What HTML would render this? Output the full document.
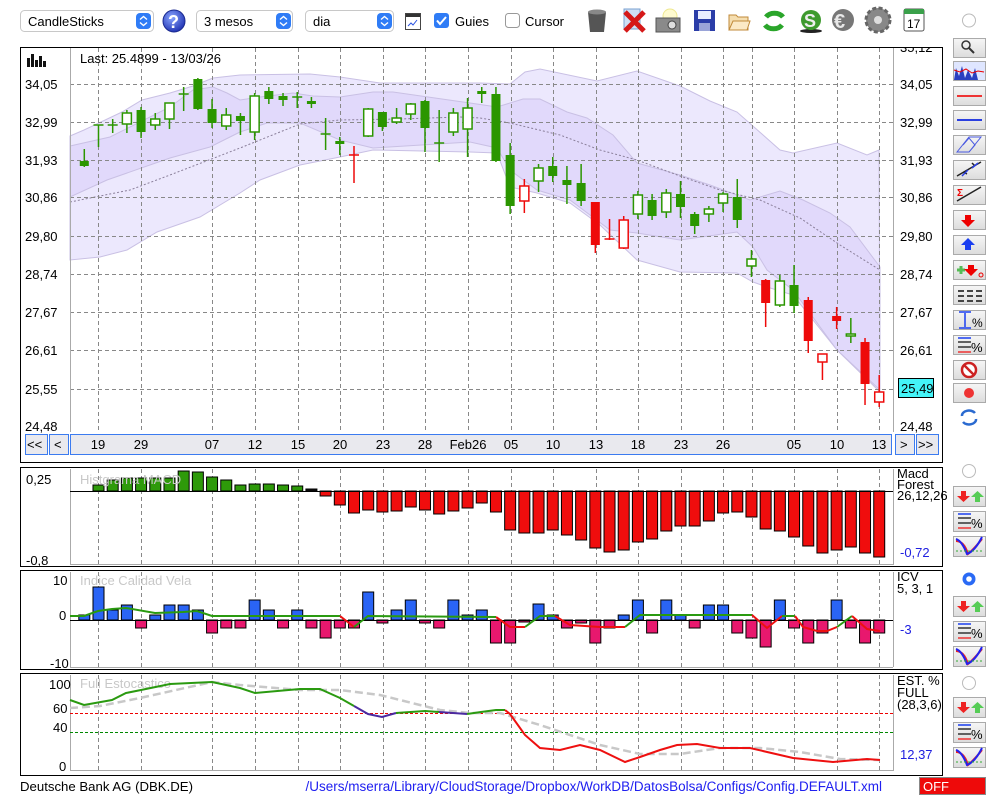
<!DOCTYPE html>
<html><head><meta charset="utf-8">
<style>
html,body{margin:0;padding:0;background:#fff;width:1000px;height:800px;overflow:hidden}
svg{position:absolute;left:0;top:0}
text{font-family:"Liberation Sans",Arial,sans-serif;font-size:13px;fill:#000}
</style></head><body>
<svg id="s" width="1000" height="800" viewBox="0 0 1000 800" xmlns="http://www.w3.org/2000/svg">
<defs>
<linearGradient id="btn" x1="0" y1="0" x2="0" y2="1"><stop offset="0" stop-color="#f6f6f6"/><stop offset="1" stop-color="#dcdcdc"/></linearGradient>
<radialGradient id="q" cx=".4" cy=".35" r=".7"><stop offset="0" stop-color="#8aa6ff"/><stop offset="1" stop-color="#1d2fb0"/></radialGradient>
<clipPath id="boxclip"><rect x="20" y="48" width="923" height="415"/></clipPath>
</defs>
<!-- toolbar -->
<rect x="20.5" y="10.5" width="133" height="21" rx="4" fill="#fff" stroke="#c8c8c8"/>
<text x="28" y="26">CandleSticks</text>
<rect x="136" y="13" width="15" height="16" rx="4" fill="#2f7cf6"/><path d="M140 19.5l3.5-3 3.5 3M140 22.5l3.5 3 3.5-3" stroke="#fff" stroke-width="1.4" fill="none"/>
<circle cx="174" cy="21" r="11" fill="url(#q)" stroke="#1a2a90"/><text x="168" y="28" style="font-size:18px;font-weight:bold;fill:#fff">?</text>
<rect x="196.5" y="10.5" width="96" height="21" rx="4" fill="#fff" stroke="#c8c8c8"/>
<text x="204" y="26">3 mesos</text>
<rect x="276" y="13" width="15" height="16" rx="4" fill="#2f7cf6"/><path d="M280 19.5l3.5-3 3.5 3M280 22.5l3.5 3 3.5-3" stroke="#fff" stroke-width="1.4" fill="none"/>
<rect x="305.5" y="10.5" width="88" height="21" rx="4" fill="#fff" stroke="#c8c8c8"/>
<text x="313" y="26">dia</text>
<rect x="377" y="13" width="15" height="16" rx="4" fill="#2f7cf6"/><path d="M381 19.5l3.5-3 3.5 3M381 22.5l3.5 3 3.5-3" stroke="#fff" stroke-width="1.4" fill="none"/>
<rect x="405.5" y="13.5" width="15" height="16" fill="#fff" stroke="#444"/><rect x="406" y="14" width="14" height="3" fill="#333"/><path d="M408 26l3-3 2 2 4-5" stroke="#2a52e0" fill="none"/>
<rect x="434" y="13" width="15" height="15" rx="3" fill="#2f7cf6"/><path d="M437 20.5l3 3.5 6-7" stroke="#fff" stroke-width="2" fill="none"/>
<text x="455" y="26">Guies</text>
<rect x="505.5" y="13.5" width="14" height="14" rx="3" fill="#fff" stroke="#999"/>
<text x="525" y="26">Cursor</text>
<!-- icons -->
<path d="M588 12h18l-2 20h-14z" fill="#555"/><ellipse cx="597" cy="12" rx="9" ry="2.5" fill="#888"/>
<rect x="624" y="9" width="16" height="20" fill="#cfe0f5" stroke="#7aa0d0"/><path d="M625 12l19 19M644 12l-19 19" stroke="#d51818" stroke-width="5"/>
<circle cx="670" cy="16" r="7" fill="#fffbd0" stroke="#eee890"/><rect x="656" y="18" width="24" height="14" fill="#8a8a8a" stroke="#555"/><circle cx="672" cy="25" r="4" fill="#ddd" stroke="#444"/>
<rect x="694" y="10" width="21" height="21" fill="#2b3da8"/><rect x="698" y="11" width="13" height="8" fill="#e8ecff"/><rect x="699" y="23" width="11" height="8" fill="#9aa4d8"/>
<path d="M729 15h7l2 2h10v13h-19z" fill="#f5deb0" stroke="#c08a3a"/><path d="M729 30l4-9h17l-3 9z" fill="#fbe9c6" stroke="#c08a3a"/>
<path d="M766 17a10 8 0 0 1 17 0" stroke="#2aa52a" stroke-width="5" fill="none"/><path d="M782 25a10 8 0 0 1-17 0" stroke="#2aa52a" stroke-width="5" fill="none"/>
<ellipse cx="811" cy="31" rx="11" ry="2" fill="#222"/><circle cx="811" cy="20" r="10" fill="#3e9a2e"/><text x="804" y="27" style="font-size:18px;font-weight:bold;fill:#eee">S</text>
<circle cx="843" cy="20" r="11" fill="#777"/><text x="834" y="28" style="font-size:20px;font-weight:bold;fill:#e8e8e8">€</text>
<circle cx="878" cy="20" r="12" fill="#888" stroke="#666" stroke-width="3" stroke-dasharray="4 2.3"/><circle cx="878" cy="20" r="4" fill="#ddd"/>
<rect x="904" y="9" width="20" height="22" rx="2" fill="#fff" stroke="#555"/><rect x="904" y="9" width="20" height="5" fill="#3aa04a"/><text x="907" y="28" style="font-size:12px">17</text>
<circle cx="969" cy="20.5" r="6.5" fill="#fff" stroke="#bbb"/>

<!-- main chart box -->
<rect x="20.5" y="47.5" width="922" height="415" fill="#fff" stroke="#000"/>
<g id="bands"></g>
<g id="grid" stroke="#888" stroke-dasharray="4 3" stroke-width="1"></g>
<line x1="70.5" y1="48" x2="70.5" y2="432" stroke="#aaa"/>
<line x1="893.5" y1="48" x2="893.5" y2="432" stroke="#aaa"/>
<g id="candles"></g>
<rect x="27" y="58" width="3" height="9" fill="#111"/><rect x="31" y="54" width="3" height="13" fill="#111"/><rect x="35" y="60" width="3" height="7" fill="#111"/><rect x="39" y="56" width="3" height="11" fill="#111"/><rect x="43" y="61" width="3" height="6" fill="#111"/>
<text x="80" y="63">Last: 25.4899 - 13/03/26</text>
<g id="ylab"></g>
<text x="900" y="52" clip-path="url(#boxclip)">35,12</text>
<rect x="898.5" y="378.5" width="35" height="19" fill="#44f4f8" stroke="#000"/>
<text x="901" y="393">25,49</text>
<!-- nav -->
<rect x="25.5" y="434.5" width="22" height="20" fill="#e9e9ee" stroke="#3b7bf0"/><text x="27" y="449">&lt;&lt;</text>
<rect x="49.5" y="434.5" width="19" height="20" fill="#e9e9ee" stroke="#3b7bf0"/><text x="54" y="449">&lt;</text>
<rect x="70.5" y="434.5" width="821" height="20" fill="#e9e9ee" stroke="#3b7bf0"/>
<rect x="895.5" y="434.5" width="19" height="20" fill="#e9e9ee" stroke="#3b7bf0"/><text x="900" y="449">&gt;</text>
<rect x="916.5" y="434.5" width="22" height="20" fill="#e9e9ee" stroke="#3b7bf0"/><text x="918" y="449">&gt;&gt;</text>
<g id="xlab" text-anchor="middle">
<text x="98" y="449">19</text><text x="141" y="449">29</text><text x="212" y="449">07</text><text x="255" y="449">12</text><text x="298" y="449">15</text><text x="340" y="449">20</text><text x="383" y="449">23</text><text x="425" y="449">28</text><text x="468" y="449">Feb26</text><text x="511" y="449">05</text><text x="553" y="449">10</text><text x="596" y="449">13</text><text x="638" y="449">18</text><text x="681" y="449">23</text><text x="723" y="449">26</text><text x="794" y="449">05</text><text x="837" y="449">10</text><text x="879" y="449">13</text>
</g>

<!-- MACD panel -->
<rect x="20.5" y="467.5" width="922" height="99" fill="#fff" stroke="#000"/>
<g id="g2" stroke="#888" stroke-dasharray="4 3"></g>
<line x1="70.5" y1="469" x2="70.5" y2="565" stroke="#aaa"/><line x1="893.5" y1="469" x2="893.5" y2="565" stroke="#aaa"/><line x1="70" y1="564.5" x2="893" y2="564.5" stroke="#aaa"/>
<g id="macd"></g>
<line x1="70" y1="491.5" x2="893" y2="491.5" stroke="#000"/>
<text x="80" y="484" style="fill:#c8c8c8">Histgrama MACD</text>
<text x="26" y="484">0,25</text><text x="26" y="565">-0,8</text>
<text x="897" y="478">Macd</text><text x="897" y="489">Forest</text><text x="897" y="500">26,12,26</text>
<text x="900" y="557" style="fill:#2020e0">-0,72</text>

<!-- ICV panel -->
<rect x="20.5" y="570.5" width="922" height="99" fill="#fff" stroke="#000"/>
<g id="g3" stroke="#888" stroke-dasharray="4 3"></g>
<line x1="70.5" y1="572" x2="70.5" y2="667" stroke="#aaa"/><line x1="893.5" y1="572" x2="893.5" y2="667" stroke="#aaa"/><line x1="70" y1="667.5" x2="893" y2="667.5" stroke="#aaa"/>
<g id="icv"></g>
<line x1="70" y1="620.5" x2="893" y2="620.5" stroke="#000"/>
<g fill="none" stroke-width="2">
<polyline stroke="#2a9a10" points="70,616 84,616 98,611 112,609 126,608 155,613 183,612 197,611 212,616 340,616"/>
<polyline stroke="#ee1010" points="340,616 354,627"/>
<polyline stroke="#2a9a10" points="354,627 368,616 496,617"/>
<polyline stroke="#ee1010" points="496,617 510,627 525,627"/>
<polyline stroke="#2a9a10" points="525,627 540,616 555,616"/>
<polyline stroke="#ee1010" points="555,616 570,625 600,627 625,627"/>
<polyline stroke="#2a9a10" points="625,627 640,615 752,615"/>
<polyline stroke="#ee1010" points="752,615 767,628 782,616"/>
<polyline stroke="#2a9a10" points="782,616 795,616"/>
<polyline stroke="#ee1010" points="795,616 803,627 817,631 827,631 837,627"/>
<polyline stroke="#2a9a10" points="837,627 852,616"/>
<polyline stroke="#ee1010" points="852,616 867,629 880,631"/>
</g>
<text x="80" y="585" style="fill:#c8c8c8">Indice Calidad Vela</text>
<text x="53" y="585">10</text><text x="59" y="620">0</text><text x="50" y="668">-10</text>
<text x="897" y="581">ICV</text><text x="897" y="593">5, 3, 1</text>
<text x="900" y="634" style="fill:#2020e0">-3</text>

<!-- Stoch panel -->
<rect x="20.5" y="673.5" width="922" height="102" fill="#fff" stroke="#000"/>
<g id="g4" stroke="#888" stroke-dasharray="4 3"></g>
<line x1="70.5" y1="675" x2="70.5" y2="771" stroke="#aaa"/><line x1="893.5" y1="675" x2="893.5" y2="771" stroke="#aaa"/><line x1="70" y1="770.5" x2="893" y2="770.5" stroke="#aaa"/>
<line x1="70" y1="713.5" x2="893" y2="713.5" stroke="#e00" stroke-dasharray="3 2"/>
<line x1="70" y1="732.5" x2="893" y2="732.5" stroke="#080" stroke-dasharray="3 2"/>
<text x="80" y="688" style="fill:#c8c8c8">Full Estocastico</text>
<polyline fill="none" stroke="#c8c8c8" stroke-width="2.5" stroke-dasharray="8 4" points="70,708 100,706 140,698 212,682 240,685 300,690 340,690 380,695 440,710 470,713 500,713 540,725 600,745 640,754 680,754 720,748 760,748 800,752 840,759 880,760"/>
<g fill="none" stroke-width="2">
<polyline stroke="#2a9a10" points="70,700 84,705 112,700 126,693 141,690 170,684 212,682 240,688 255,693 300,689 320,689 340,698 354,706"/>
<polyline stroke="#4a2aa0" points="354,706 368,714 382,717 396,713"/>
<polyline stroke="#2a9a10" points="396,713 425,711 439,712"/>
<polyline stroke="#4a2aa0" points="439,712 467,714"/>
<polyline stroke="#2a9a10" points="467,714 481,712 496,710 505,710"/>
<polyline stroke="#ee1010" points="505,710 510,714 525,735 540,748 560,750 580,745 600,750 625,762 640,757 660,750 677,745 697,744 720,748 750,748 793,758 833,762 867,759 880,760"/>
</g>
<text x="49" y="689">100</text><text x="53" y="713">60</text><text x="53" y="732">40</text><text x="59" y="771">0</text>
<text x="897" y="685">EST. %</text><text x="897" y="697">FULL</text><text x="897" y="709">(28,3,6)</text>
<text x="900" y="759" style="fill:#2020e0">12,37</text>

<!-- footer -->
<text x="20" y="791" style="font-size:13.2px">Deutsche Bank AG (DBK.DE)</text>
<text x="882" y="791" text-anchor="end" style="fill:#2020f0;font-size:13.5px">/Users/mserra/Library/CloudStorage/Dropbox/WorkDB/DatosBolsa/Configs/Config.DEFAULT.xml</text>
<rect x="919.5" y="777.5" width="66" height="17" fill="#ee0a0a" stroke="#888"/>
<text x="923" y="791" style="fill:#fff">OFF</text>

<g id="side"></g>
</svg>
<script>
var NS="http://www.w3.org/2000/svg";
function el(p,t,a){var e=document.createElementNS(NS,t);for(var k in a)e.setAttribute(k,a[k]);document.getElementById(p).appendChild(e);return e;}
function X(i){return 84.3+i*14.195;}
el("bands","polygon",{points:"70,136 84,130 122,112 142,100 170,93 193,86 213,78 240,75 310,74 340,77 380,83 480,83 510,84 525,72 540,69 597,81 637,71 680,86 710,101 737,112 780,150 793,153 837,143 867,155 879,150 880,392 837,350 793,295 767,287 753,282 737,273 680,272 637,260 600,225 570,203 537,193 510,187 497,153 470,152 373,150 340,157 300,165 260,180 240,193 200,217 157,232 127,250 100,257 70,260",fill:"#ece8fd",stroke:"#c9c0e4"});
el("bands","polygon",{points:"70,146 110,137 170,107 193,90 213,87 227,93 240,100 260,97 293,93 313,96 340,97 373,92 393,92 470,103 497,107 523,99 540,99 567,112 587,118 613,135 637,163 680,175 710,185 750,200 780,191 803,200 830,213 850,227 880,267 880,390 837,350 793,290 767,270 753,247 737,232 680,240 637,233 610,230 570,200 537,190 510,170 497,148 470,142 373,148 340,140 300,123 267,123 240,132 210,147 170,158 107,180 70,197",fill:"#e1d9fb",stroke:"#c9c0e4"});
el("bands","polyline",{points:"70,202 130,190 170,175 240,148 300,124 340,120 400,119 460,117 480,118 510,123 560,135 600,150 637,160 680,176 720,190 760,200 800,218 840,245 880,270",fill:"none",stroke:"#8a7f9a","stroke-dasharray":"2 2"});
var vx=[98,141,212,255,298,340,383,425,468,511,553,596,638,681,723,752,794,837,879];
vx.forEach(function(x){el("grid","line",{x1:x+.5,y1:48,x2:x+.5,y2:432});
 el("g2","line",{x1:x+.5,y1:469,x2:x+.5,y2:564});el("g3","line",{x1:x+.5,y1:572,x2:x+.5,y2:667});el("g4","line",{x1:x+.5,y1:675,x2:x+.5,y2:770});});
var hy=[84,122,160,197,236,274,312,350,389,426];
var lab=["34,05","32,99","31,93","30,86","29,80","28,74","27,67","26,61","25,55","24,48"];
hy.forEach(function(y,i){if(i<9)el("grid","line",{x1:70,y1:y+.5,x2:893,y2:y+.5});
 var t=el("ylab","text",{x:25,y:y+5});t.textContent=lab[i];
 if(i!=8){var t2=el("ylab","text",{x:900,y:y+5});t2.textContent=lab[i];}});
var C=[[149,161,166,167,'g'],[125,125,126,147,'x'],[119,125,126,133,'x'],[110,113,124,133,'w'],[107,110,132,138,'g'],[113,119,125,130,'w'],[103,103,119,129,'w'],[87,94,95,111,'x'],[78,79,109,110,'g'],[99,109,123,128,'g'],[108,115,126,130,'w'],[113,116,121,135,'g'],[93,96,132,140,'w'],[87,91,99,104,'g'],[93,96,100,106,'g'],[92,97,98,108,'x'],[97,101,104,108,'g'],[118,134,135,150,'x'],[137,141,144,155,'g'],[146,155,156,183,'rx'],[108,109,136,137,'w'],[112,112,127,131,'g'],[108,118,122,124,'w'],[103,104,114,120,'w'],[100,101,128,152,'g'],[110,143,144,162,'x'],[108,113,132,136,'w'],[98,108,129,157,'w'],[87,91,94,103,'g'],[87,94,161,162,'g'],[143,155,206,214,'g'],[179,186,201,213,'R'],[164,168,181,192,'w'],[157,166,176,182,'g'],[166,180,185,204,'g'],[164,183,201,206,'g'],[202,202,245,253,'r'],[219,239,240,240,'rx'],[216,220,248,249,'R'],[191,195,214,219,'w'],[194,200,216,220,'g'],[189,193,212,218,'w'],[181,194,207,218,'g'],[212,214,226,234,'g'],[206,209,214,222,'w'],[192,194,203,212,'w'],[179,197,220,228,'g'],[250,259,266,277,'w'],[279,280,303,327,'r'],[275,281,305,307,'w'],[265,285,306,313,'g'],[297,300,341,353,'r'],[354,354,362,380,'R'],[307,316,321,329,'r'],[318,334,336,343,'w'],[338,342,384,405,'r'],[375,392,402,407,'R']];
C.forEach(function(c,i){var x=X(i),s=c[4];var col=(s[0]=='r'||s=='R')?'#ee0a0a':'#2b9600';
 el("candles","line",{x1:x,y1:c[0],x2:x,y2:c[3],stroke:col,"stroke-width":1.5});
 if(s=='x'||s=='rx'){el("candles","line",{x1:x-5,y1:c[1],x2:x+5,y2:c[1],stroke:col,"stroke-width":1.5});}
 else if(s=='w'||s=='R'){el("candles","rect",{x:x-4.5,y:c[1],width:9,height:Math.max(c[2]-c[1],2),fill:"#fff",stroke:col,"stroke-width":1.5});}
 else el("candles","rect",{x:x-4.5,y:c[1],width:9,height:Math.max(c[2]-c[1],2),fill:col});});
var M=[491,485,480,478,478,478,478,471,472,477,480,485,484,484,485,486,489,496,505,513,510,512,511,507,510,514,511,508,503,512,530,533,533,530,535,540,548,552,550,542,539,531,526,526,521,513,512,517,529,531,537,546,553,550,547,553,557];
M.forEach(function(v,i){if(v==491)return;var x=X(i);var up=v<491;
 el("macd","rect",{x:x-5.5,y:up?v:491,width:11,height:Math.abs(v-491),fill:i==16?'#111':(up?'#2e9a0a':'#f00d0d'),stroke:"#000","stroke-width":1});});
var I=[615,587,610,605,628,615,605,605,610,633,628,628,600,610,628,610,628,638,628,628,592,623,610,600,623,628,600,615,610,643,643,622,604,615,628,623,643,628,615,600,633,600,615,628,605,605,633,638,647,600,628,643,633,600,628,643,633];
I.forEach(function(v,i){var x=X(i);var up=v<620;
 el("icv","rect",{x:x-5.5,y:up?v:620,width:11,height:Math.abs(v-620),fill:up?'#2a64f5':'#e8186e',stroke:"#000","stroke-width":1});});
function btn(y,h){el("side","rect",{x:953.5,y:y+.5,width:32,height:h||19,fill:"url(#btn)",stroke:"#aaa"});}
var sy=[38,61,86,110,135,160,185,210,235,260,285,310,335,360,383];
sy.forEach(function(y){btn(y);});
el("side","circle",{cx:966,cy:45,r:4,fill:"none",stroke:"#333","stroke-width":1.5});el("side","line",{x1:969,y1:48,x2:974,y2:53,stroke:"#333","stroke-width":2});
el("side","rect",{x:954,y:62,width:31,height:18,fill:"#dfe6ff"});el("side","polyline",{points:"954,80 956,68 959,76 962,66 965,78 968,70 972,78 975,68 978,80",fill:"#2a3fc0"});el("side","polyline",{points:"954,70 960,72 966,69 972,73 978,71 984,72",fill:"none",stroke:"#e00"});
el("side","line",{x1:957,y1:96,x2:982,y2:96,stroke:"#e33","stroke-width":2});
el("side","line",{x1:957,y1:120,x2:982,y2:120,stroke:"#2a3fe0","stroke-width":2});
el("side","path",{d:"M957 152l12-15h12l-12 15zM963 145l6-7 6 7-6 7",fill:"none",stroke:"#4a5ae0"});
el("side","path",{d:"M957 176l24-14M963 172l4 2M975 166l-3-3",fill:"none",stroke:"#222","stroke-width":1.5});el("side","path",{d:"M962 176l6-6M972 168l6-5",stroke:"#2a3fe0","stroke-width":1.5});
el("side","path",{d:"M957 201l24-14",stroke:"#222","stroke-width":1.5});el("side","text",{x:957,y:196,style:"font-size:10px;fill:#e00;font-weight:bold"}).textContent="Σ";
el("side","path",{d:"M965 215h6v5h4l-7 7-7-7h4z",fill:"#e00"});
el("side","path",{d:"M965 250h6v-5h4l-7-7-7 7h4z",fill:"#1a3ef0"});
el("side","path",{d:"M957 270h8M961 266v8",stroke:"#5b5","stroke-width":3});el("side","path",{d:"M968 265h6v4h4l-7 7-7-7h4z",fill:"#e00"});el("side","circle",{cx:981,cy:275,r:2,fill:"none",stroke:"#e00"});
[291,296,301].forEach(function(y){el("side","path",{d:"M958 "+y+"h6M967 "+y+"h6M976 "+y+"h6",stroke:"#444","stroke-width":2});});
el("side","path",{d:"M959 312h12M959 328h12M965 313v14",stroke:"#1a3ef0","stroke-width":1.5});el("side","text",{x:972,y:327,style:"font-size:12px"}).textContent="%";
function pct(y){el("side","path",{d:"M958 "+(y+5)+"h13M958 "+(y+10)+"h13",stroke:"#333","stroke-width":1.5});el("side","path",{d:"M958 "+(y+1)+"h13",stroke:"#1a3ef0","stroke-width":1.5});el("side","path",{d:"M958 "+(y+15)+"h13",stroke:"#e33","stroke-width":1.5});el("side","text",{x:971,y:y+15,style:"font-size:13px"}).textContent="%";}
pct(337);
el("side","circle",{cx:969,cy:370,r:7,fill:"#fff",stroke:"#c22","stroke-width":2.5});el("side","line",{x1:964,y1:365,x2:974,y2:375,stroke:"#c22","stroke-width":2.5});
el("side","circle",{cx:969,cy:393,r:5,fill:"#e33"});
el("side","path",{d:"M962 416a7 5 0 0 1 13-3M976 419a7 5 0 0 1-13 3",fill:"none",stroke:"#2a6ad0","stroke-width":2.5});
function radio(y,sel){if(sel){el("side","circle",{cx:969,cy:y,r:6.5,fill:"#2a6af5"});el("side","circle",{cx:969,cy:y,r:2.8,fill:"#fff"});}else el("side","circle",{cx:969,cy:y,r:6.5,fill:"#fff",stroke:"#bbb"});}
function arrows(y){btn(y,20);el("side","path",{d:"M961 "+(y+5)+"h5v5h4l-6.5 6-6.5-6h4z",fill:"#e22"});el("side","path",{d:"M975 "+(y+16)+"h5v-5h4l-6.5-6-6.5 6h4z",fill:"#5c5"});}
function vee(y){btn(y,20);el("side","path",{d:"M956 "+(y+5)+"q8 0 12 13q6-5 14-15",fill:"none",stroke:"#e22","stroke-width":2});el("side","path",{d:"M956 "+(y+3)+"q6 2 11 15q8-3 15-17",fill:"none",stroke:"#22e","stroke-width":2});el("side","path",{d:"M956 "+(y+15)+"h28",stroke:"#3a3","stroke-dasharray":"2 2"});}
[[471,0,486],[579,1,596],[683,0,697]].forEach(function(a){radio(a[0],a[1]);arrows(a[2]);btn(a[2]+25,20);pct(a[2]+27);vee(a[2]+50);});
</script>
</body></html>
